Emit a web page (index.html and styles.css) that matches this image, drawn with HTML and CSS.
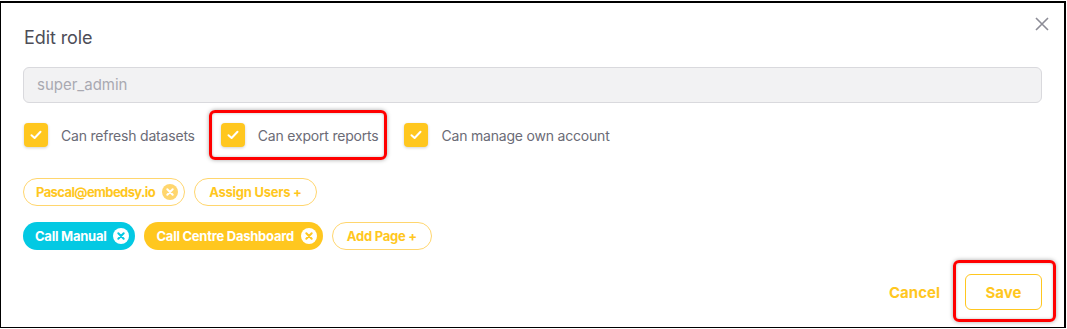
FILE: index.html
```html
<!DOCTYPE html>
<html>
<head>
<meta charset="utf-8">
<link rel="stylesheet" href="styles.css">
</head>
<body>
<div class="frame">
  <div class="dialog">
    <div class="header">
      <h2 class="title">Edit role</h2>
      <button class="close" aria-label="Close">
        <svg width="14" height="14" viewBox="0 0 14 14"><path d="M1 1L13 13M13 1L1 13" stroke="#8c8c96" stroke-width="1.6" fill="none"/></svg>
      </button>
    </div>
    <div class="input">super_admin</div>
    <div class="checks">
      <label class="check">
        <span class="box"><svg width="12" height="10" viewBox="0 0 12 10"><path d="M1.5 5.2L4.6 8L10.5 1.8" stroke="#fff" stroke-width="2" fill="none" stroke-linecap="round" stroke-linejoin="round"/></svg></span>
        <span class="label">Can refresh datasets</span>
      </label>
      <label class="check highlight">
        <span class="box"><svg width="12" height="10" viewBox="0 0 12 10"><path d="M1.5 5.2L4.6 8L10.5 1.8" stroke="#fff" stroke-width="2" fill="none" stroke-linecap="round" stroke-linejoin="round"/></svg></span>
        <span class="label">Can export reports</span>
      </label>
      <label class="check">
        <span class="box"><svg width="12" height="10" viewBox="0 0 12 10"><path d="M1.5 5.2L4.6 8L10.5 1.8" stroke="#fff" stroke-width="2" fill="none" stroke-linecap="round" stroke-linejoin="round"/></svg></span>
        <span class="label">Can manage own account</span>
      </label>
    </div>
    <div class="chips">
      <span class="chip outline">Pascal@embedsy.io
        <svg class="x" width="16" height="16" viewBox="0 0 16 16"><circle cx="8" cy="8" r="8" fill="#ffd66e"/><path d="M5.3 5.3L10.7 10.7M10.7 5.3L5.3 10.7" stroke="#fff" stroke-width="2" stroke-linecap="round"/></svg>
      </span>
      <span class="chip outline btn">Assign Users +</span>
    </div>
    <div class="chips">
      <span class="chip cyan">Call Manual
        <svg class="x" width="16" height="16" viewBox="0 0 16 16"><circle cx="8" cy="8" r="8" fill="#fff"/><path d="M5.3 5.3L10.7 10.7M10.7 5.3L5.3 10.7" stroke="#03c9e3" stroke-width="2" stroke-linecap="round"/></svg>
      </span>
      <span class="chip yellow">Call Centre Dashboard
        <svg class="x" width="16" height="16" viewBox="0 0 16 16"><circle cx="8" cy="8" r="8" fill="#fff"/><path d="M5.3 5.3L10.7 10.7M10.7 5.3L5.3 10.7" stroke="#ffc71f" stroke-width="2" stroke-linecap="round"/></svg>
      </span>
      <span class="chip outline btn">Add Page +</span>
    </div>
    <div class="footer">
      <button class="cancel">Cancel</button>
      <button class="save highlight-save">Save</button>
    </div>
  </div>
</div>
</body>
</html>
```

FILE: styles.css
```css
* { box-sizing: border-box; }
html, body { margin: 0; padding: 0; background: #fff; }
body { font-family: Inter, "Noto Sans", "Liberation Sans", sans-serif; }

.frame {
  margin-top: 1px;
  width: 1066px;
  height: 327px;
  border: 1px solid #000;
  border-top-width: 2px;
  border-right-width: 2px;
  background: #fff;
}

.dialog {
  padding: 0 22px 0 22px;
}

.header {
  display: flex;
  justify-content: space-between;
  align-items: flex-start;
  height: 64px;
}
.title {
  margin: 23px 0 0 1px;
  font-size: 18px;
  font-weight: 400;
  line-height: 24px;
  color: #4d4d57;
  letter-spacing: -0.1px;
}
.close {
  margin: 14px -7px 0 0;
  padding: 0;
  border: 0;
  background: none;
  width: 14px;
  height: 14px;
}

.input {
  height: 36px;
  border: 1px solid #d9d9dd;
  border-radius: 6px;
  background: #f2f2f3;
  color: #a9a9b1;
  font-size: 15px;
  padding: 0 13px;
  line-height: 34px;
}

.checks {
  display: flex;
  align-items: center;
  gap: 26px;
  margin-top: 19px;
  height: 26px;
  padding-left: 1px;
}
.check {
  display: flex;
  align-items: center;
  gap: 13px;
  position: relative;
}
.box {
  width: 24px;
  height: 24px;
  border-radius: 4px;
  background: #ffc71f;
  box-shadow: 0 1px 3px rgba(0,0,0,0.18);
  display: flex;
  align-items: center;
  justify-content: center;
}
.label {
  font-size: 14px;
  color: #6b6b76;
  letter-spacing: -0.2px;
}
.highlight::after {
  content: "";
  position: absolute;
  left: -12px;
  top: -13px;
  right: -9px;
  bottom: -13px;
  border: 3px solid #f00;
  border-radius: 6px;
  box-shadow: 0 0 4px rgba(0,0,0,0.35), inset 0 0 3px rgba(0,0,0,0.25);
}

.chips {
  display: flex;
  gap: 9px;
  margin-top: 30px;
}
.chips + .chips { margin-top: 16px; }
.chip {
  display: inline-flex;
  align-items: center;
  gap: 7px;
  height: 28px;
  border-radius: 14px;
  padding: 0 6px 0 12px;
  font-size: 13px;
  font-weight: 700;
  letter-spacing: -0.25px;
  white-space: nowrap;
}
.chip.btn { padding: 0 14px; }
.outline {
  border: 1px solid #ffd66e;
  color: #ffc71f;
  background: #fff;
}
.outline:first-child { letter-spacing: -0.6px; }
.cyan { background: #03c9e3; color: #fff; }
.yellow { background: #ffc71f; color: #fff; }
.x { flex: none; }

.footer {
  display: flex;
  justify-content: flex-end;
  align-items: center;
  gap: 25px;
  margin-top: 24px;
}
.footer button {
  font-family: inherit;
  font-size: 15px;
  font-weight: 700;
  color: #ffc71f;
  background: #fff;
  cursor: pointer;
}
.cancel {
  border: 0;
  padding: 0;
}
.save {
  width: 77px;
  height: 36px;
  border: 1px solid #ffc71f;
  border-radius: 6px;
  position: relative;
}
.highlight-save::after {
  content: "";
  position: absolute;
  left: -13px;
  top: -15px;
  right: -15px;
  bottom: -13px;
  border: 3px solid #f00;
  border-radius: 6px;
  box-shadow: 0 0 4px rgba(0,0,0,0.35), inset 0 0 3px rgba(0,0,0,0.25);
}
```
